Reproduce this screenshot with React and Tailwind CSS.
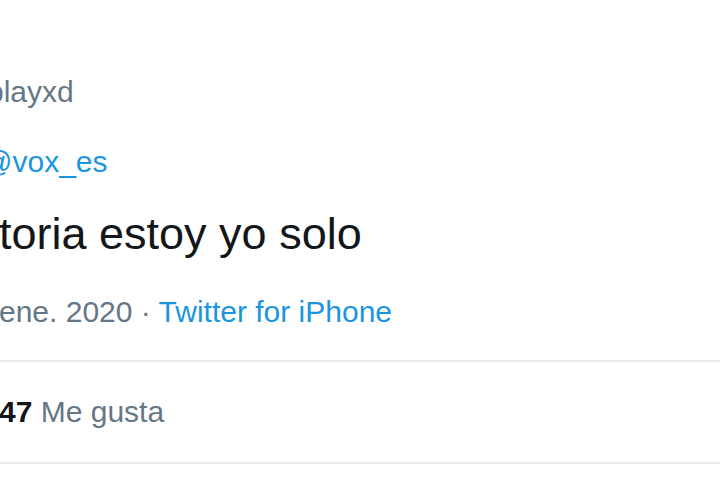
export default function App() {
  return (
    <div className="w-[720px] h-[480px] overflow-hidden bg-white" style={{ fontFamily: '"Liberation Sans", Arial, sans-serif' }}>
      <div className="flex flex-col">
        <div className="mt-[74px] h-[36px] text-[30px] leading-[36px] text-[#657786] whitespace-nowrap -ml-[13px]">playxd</div>
        <div className="mt-[34px] h-[36px] text-[30px] leading-[36px] text-[#1b95e0] whitespace-nowrap -ml-[18px]">@vox_es</div>
        <div className="mt-[26px] h-[56px] text-[45px] leading-[56px] text-[#14171a] whitespace-nowrap -ml-[1px]">toria estoy yo solo</div>
        <div className="mt-[32px] h-[36px] text-[30px] leading-[36px] text-[#657786] whitespace-nowrap -ml-[1px]">
          ene. 2020 · <span className="text-[#1b95e0]">Twitter for iPhone</span>
        </div>
        <div className="mt-[30px] h-[2px] bg-[#e6ecf0]" />
        <div className="mt-[32px] h-[36px] text-[30px] leading-[36px] text-[#657786] whitespace-nowrap -ml-[1px]">
          <span className="font-bold text-[#14171a]">47</span> Me gusta
        </div>
        <div className="mt-[32px] h-[2px] bg-[#e6ecf0]" />
      </div>
    </div>
  );
}
